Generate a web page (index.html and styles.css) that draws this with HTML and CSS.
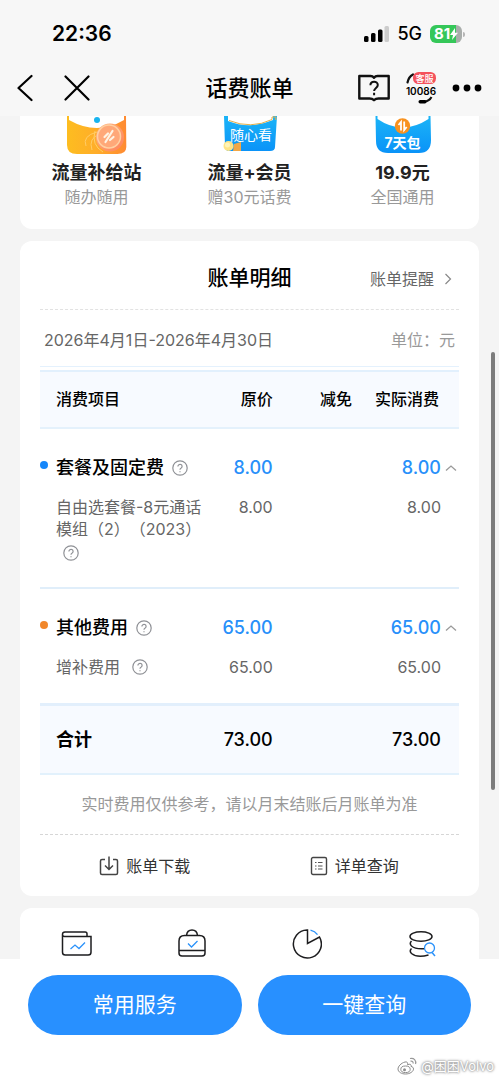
FILE: index.html
```html
<!DOCTYPE html>
<html lang="zh-CN">
<head>
<meta charset="utf-8">
<meta name="viewport" content="width=device-width, initial-scale=1">
<title>话费账单</title>
<link rel="stylesheet" href="styles.css">
</head>
<body>
<svg class="sprite" aria-hidden="true">
  <symbol id="help" viewBox="0 0 16 16">
    <circle cx="8" cy="8" r="7.2" fill="none" stroke="#8f9196" stroke-width="1.2"/>
    <path d="M5.9 6.4a2.1 2 0 1 1 3.3 1.6C8.4 8.5 8 8.8 8 9.8M8 11.2v1.1" fill="none" stroke="#8f9196" stroke-width="1.2"/>
  </symbol>
  <symbol id="up" viewBox="0 0 12 8">
    <path d="M1 6.5 6 2l5 4.5" fill="none" stroke="#9a9a9a" stroke-width="1.3"/>
  </symbol>
</svg>

<header class="top">
  <div class="status">
    <span class="clock">22:36</span>
    <div class="signals">
      <svg width="25" height="16" viewBox="0 0 25 16" aria-hidden="true">
        <rect x="0" y="10" width="4.500" height="6" rx="1.5"/><rect x="7" y="7" width="4.500" height="9" rx="1.5"/><rect x="14" y="3.500" width="4.500" height="12.500" rx="1.5"/><rect x="20.500" y="0" width="4.500" height="16" rx="1.5" fill="#ccc"/>
      </svg>
      <span class="net">5G</span>
      <div class="battery">
        <span class="battery-cell">81<svg width="8" height="12" viewBox="0 0 8 12" aria-hidden="true"><path d="M5 0 0 7h3L2 12l6-7.200H5z" fill="#fff"/></svg></span>
        <span class="battery-nub"></span>
      </div>
    </div>
  </div>
  <nav class="nav">
    <div class="nav-side">
      <button class="icon-btn" aria-label="返回"><svg width="16" height="28" viewBox="0 0 16 28"><path d="M14.500 2 1.500 14l13 12" fill="none" stroke="#000" stroke-width="2.200" stroke-linecap="round" stroke-linejoin="round"/></svg></button>
      <button class="icon-btn" aria-label="关闭"><svg width="26" height="26" viewBox="0 0 26 26"><path d="m1.500 1.500 23 23m0-23-23 23" stroke="#000" stroke-width="2.200" stroke-linecap="round"/></svg></button>
    </div>
    <h1 class="nav-title">话费账单</h1>
    <div class="nav-side nav-end">
      <button class="icon-btn" aria-label="帮助"><svg width="32" height="28" viewBox="0 0 32 28"><path d="M1.300 2h11.200q2.200 0 3.500 1.700Q17.300 2 19.500 2h11.200v22.500H20.500q-2.700 0-4.500 1.700-1.800-1.700-4.500-1.700H1.300z" fill="none" stroke="#111" stroke-width="2.400" stroke-linejoin="round"/><path d="M12.400 11.200c0-4.600 7.400-4.600 7.400-.3 0 2.900-3.700 3.100-3.700 6.200M16.100 18.800v2.500" fill="none" stroke="#111" stroke-width="2"/></svg></button>
      <button class="icon-btn" aria-label="10086客服"><svg width="32" height="32" viewBox="0 0 32 32"><path d="M2.500 10.500Q3.500 5 8 2.500" fill="none" stroke="#111" stroke-width="2.200" stroke-linecap="round"/><rect x="8" y="0" width="23" height="12" rx="5.500" fill="#f4525c"/><text class="svc-tag" x="19.500" y="9.500">客服</text><text class="svc-no" x="16" y="23">10086</text><path d="M26.500 25q-2 4-7.500 4.800" fill="none" stroke="#111" stroke-width="2"/><rect x="13.500" y="28" width="8" height="3.400" rx="1.700"/></svg></button>
      <button class="icon-btn" aria-label="更多"><svg width="30" height="8" viewBox="0 0 30 8"><circle cx="4" cy="4" r="3.400"/><circle cx="15" cy="4" r="3.400"/><circle cx="26" cy="4" r="3.400"/></svg></button>
    </div>
  </nav>
</header>

<main class="content">
  <section class="card offers">
    <a class="offer" href="#data">
      <svg width="66" height="38" viewBox="64 116 66 38" aria-hidden="true">
        <defs>
          <linearGradient id="gold" x1="0" x2="1"><stop offset="0" stop-color="#fdbd20"/><stop offset=".5" stop-color="#ffad29"/><stop offset="1" stop-color="#ff8a32"/></linearGradient>
          <linearGradient id="coin" x1="0" y1="0" x2="1" y2="1"><stop offset="0" stop-color="#ffb47c"/><stop offset="1" stop-color="#ff835b"/></linearGradient>
        </defs>
        <path d="M67 116h2v4q28 16 55 0v-4h2l.3 31q0 7-9 7H77q-10 0-10-9z" fill="url(#gold)"/>
        <circle cx="97" cy="120" r="3" fill="#18b4ef"/>
        <path d="M97 132q-15 4-11 14M100 134q-12 4-8 16M95 131q-4 14 8 21" fill="none" stroke="#ffcc68" stroke-width="1"/>
        <circle cx="110" cy="137.500" r="14" fill="url(#coin)"/>
        <circle cx="109" cy="136.500" r="11.500" fill="#ffa878" stroke="#ffd0a2" stroke-width="1.500"/>
        <path d="m105.500 142 7-11M104.500 137l3.500-3.500M110 140l3.500-3" fill="none" stroke="#fff3e2" stroke-width="2.200" stroke-linecap="round"/>
      </svg>
      <strong class="offer-name">流量补给站</strong>
      <span class="offer-sub">随办随用</span>
    </a>
    <a class="offer" href="#member">
      <svg width="60" height="38" viewBox="219 116 60 38" aria-hidden="true">
        <defs><linearGradient id="sky" x1="0" y1="0" x2="0" y2="1"><stop offset="0" stop-color="#1bb4f7"/><stop offset="1" stop-color="#0a93f8"/></linearGradient></defs>
        <path d="M223 116h4v5q22 9 45-1v-4h4l-2 31q0 4-5 4h-41q-4 0-4-5z" fill="url(#sky)"/>
        <path d="M228 120.500q22 9 43-1v-2.500h4l-.3 3" fill="none" stroke="#e3b04a" stroke-width="1"/>
        <path d="m233 144 7-2v9h-8z" fill="#f1a746"/>
        <circle cx="227.500" cy="146" r="5" fill="#ffe486"/><circle cx="226.500" cy="145" r="2.500" fill="#fff4b8"/>
        <text class="tag-thin" x="250" y="140">随心看</text>
      </svg>
      <strong class="offer-name">流量+会员</strong>
      <span class="offer-sub">赠30元话费</span>
    </a>
    <a class="offer" href="#week">
      <svg width="60" height="38" viewBox="373 116 60 38" aria-hidden="true">
        <path d="M375.500 116h2v3q25 17 51 0v-3h2l.5 24q0 13-12 13h-31q-12 0-12-12z" fill="url(#sky)"/>
        <circle cx="402.500" cy="126" r="7.700" fill="#f8921f"/>
        <path d="M401 130.500v-8.500l-2.500 3M404.200 121.500v8.500l2.500-3" fill="none" stroke="#fff" stroke-width="1.800"/>
        <text class="tag-bold" x="402.500" y="148">7天包</text>
      </svg>
      <strong class="offer-name">19.9元</strong>
      <span class="offer-sub">全国通用</span>
    </a>
  </section>

  <section class="card bill">
    <div class="bill-head">
      <h2 class="bill-title">账单明细</h2>
      <a class="remind" href="#remind">账单提醒<svg width="8" height="12" viewBox="0 0 8 12" aria-hidden="true"><path d="m1.500 1 5 5-5 5" fill="none" stroke="#888" stroke-width="1.200"/></svg></a>
    </div>
    <div class="period"><span>2026年4月1日-2026年4月30日</span><span class="unit">单位：元</span></div>
    <table class="fees">
      <thead>
        <tr><th class="c-item">消费项目</th><th class="c-price">原价</th><th class="c-off">减免</th><th class="c-paid">实际消费</th></tr>
      </thead>
      <tbody>
        <tr class="group">
          <td class="dot dot-blue"><span class="label">套餐及固定费<button class="help" aria-label="说明"><svg width="16" height="16"><use href="#help"/></svg></button></span></td>
          <td>8.00</td><td></td>
          <td><span class="paid">8.00<button class="fold" aria-label="收起"><svg width="12" height="8"><use href="#up"/></svg></button></span></td>
        </tr>
        <tr class="detail">
          <td>自由选套餐-8元通话模组（2）（2023） <button class="help help-line" aria-label="说明"><svg width="16" height="16"><use href="#help"/></svg></button></td>
          <td>8.00</td><td></td><td>8.00</td>
        </tr>
      </tbody>
      <tbody>
        <tr class="group">
          <td class="dot dot-orange"><span class="label">其他费用<button class="help" aria-label="说明"><svg width="16" height="16"><use href="#help"/></svg></button></span></td>
          <td>65.00</td><td></td>
          <td><span class="paid">65.00<button class="fold" aria-label="收起"><svg width="12" height="8"><use href="#up"/></svg></button></span></td>
        </tr>
        <tr class="detail">
          <td><span class="label label-wide">增补费用<button class="help" aria-label="说明"><svg width="16" height="16"><use href="#help"/></svg></button></span></td>
          <td>65.00</td><td></td><td>65.00</td>
        </tr>
      </tbody>
      <tfoot>
        <tr><th>合计</th><td>73.00</td><td></td><td>73.00</td></tr>
      </tfoot>
    </table>
    <p class="note">实时费用仅供参考，请以月末结账后月账单为准</p>
    <div class="actions">
      <a class="action" href="#download"><svg width="20" height="20" viewBox="0 0 20 20" aria-hidden="true"><path d="M6 3.500H3q-1.500 0-1.500 1.500v12q0 1.500 1.500 1.500h14q1.500 0 1.500-1.500V5q0-1.500-1.500-1.500h-3M10 .5v13M6 9.500l4 4 4-4" fill="none" stroke="#444" stroke-width="1.500"/></svg>账单下载</a>
      <a class="action" href="#details"><svg width="18" height="20" viewBox="0 0 18 20" aria-hidden="true"><rect x="1.500" y="1.500" width="15" height="17" rx="1.500" fill="none" stroke="#444" stroke-width="1.400"/><path d="M5 6.500h1.500M5 10h1.500M5 13h1.500M8 6.500h4.500M8 10h4.500M8 13h4.500" stroke="#555" stroke-width="1.200"/></svg>详单查询</a>
    </div>
  </section>

  <section class="card tools">
    <a href="#wallet" aria-label="账户"><svg width="32" height="30" viewBox="0 0 32 30"><path d="M26 7.500V4.800q0-1.800-1.800-1.800H4Q1.500 3 1.500 5.500v17.700Q1.500 26 4.300 26h22.900q2.800 0 2.800-2.800V7.500H3.500q-2 0-2-2" fill="none" stroke="#1d1d1f" stroke-width="1.500"/><path d="m9.500 20 4.500-4 4 3.500 6-6" fill="none" stroke="#2b92fa" stroke-width="1.300"/></svg></a>
    <a href="#orders" aria-label="办理"><svg width="30" height="30" viewBox="0 0 30 30"><path d="M9.500 6.500Q10 1 15 1t5.500 5.500M7.500 6.500h15q5.500 0 5.500 5.500v12q0 3-3 3H5q-3 0-3-3V12q0-5.500 5.500-5.500zM2 21.500h26" fill="none" stroke="#1d1d1f" stroke-width="1.500"/><path d="m11 14.500 3.500 3.500 6-6" fill="none" stroke="#2b92fa" stroke-width="1.300"/></svg></a>
    <a href="#usage" aria-label="用量"><svg width="30" height="30" viewBox="0 0 30 30"><path d="M15 1A14 14 0 1 0 27.500 8L15.500 14.500V1z" fill="none" stroke="#1d1d1f" stroke-width="1.500"/><path d="M18.500 1.200q4.500 1 7 4.500" fill="none" stroke="#2b92fa" stroke-width="1.300"/></svg></a>
    <a href="#records" aria-label="查询"><svg width="28" height="28" viewBox="0 0 28 28"><ellipse cx="13" cy="6.500" rx="11" ry="4.700" fill="none" stroke="#1d1d1f" stroke-width="1.500"/><path d="M3.500 11Q1 13.500 3.500 16q4 3.500 13 2.700M3.500 18.500Q1 21 3.500 23.500 9 28 20.500 25" fill="none" stroke="#1d1d1f" stroke-width="1.500"/><circle cx="21.500" cy="18" r="5" fill="#fff" stroke="#2b92fa" stroke-width="1.300"/><path d="m24 22.500 3 3.500" stroke="#2b92fa" stroke-width="1.500"/></svg></a>
  </section>
  <div class="scroll-thumb"></div>
</main>

<footer class="dock">
  <button class="primary">常用服务</button>
  <button class="primary">一键查询</button>
  <div class="mark"><svg width="20" height="18" viewBox="0 0 20 18" aria-hidden="true"><path d="M8 5C4 6 1 9.500 1 12c0 3 3.500 5 7.500 5 4.500 0 8-2.500 8-5 0-1.500-1-2.200-2.500-2.600.7-2-1-2.700-3.500-1.700C11 5.500 10 4.500 8 5z" fill="#fff" stroke="#8d8d8d"/><ellipse cx="8.500" cy="12.300" rx="4.700" ry="3.300" fill="none" stroke="#8d8d8d"/><circle cx="7.500" cy="12.800" r="1.500" fill="#8d8d8d"/><path d="M13 1.500c4-1 6.500 2 5.500 5.500M13.500 4.200c2-.4 2.900.8 2.500 2.300" fill="none" stroke="#999" stroke-width="1.200"/></svg>@困困Volvo</div>
</footer>
</body>
</html>
```
FILE: styles.css
```css
* { box-sizing: border-box; }
body {
  margin: 0;
  height: 100vh;
  display: flex;
  flex-direction: column;
  overflow: hidden;
  background: #f4f4f4;
  color: #000;
  font: 400 16px/22px Inter, "Noto Sans CJK SC", sans-serif;
  text-spacing-trim: space-all;
}
button { padding: 0; border: 0; background: none; color: inherit; font: inherit; cursor: pointer; }
a { color: inherit; text-decoration: none; }
svg { display: block; flex: none; }
.sprite { position: absolute; width: 0; height: 0; }

.top { background: #f7f7f7; }
.status { display: flex; justify-content: space-between; align-items: center; padding: 20px 34px 0 52px; line-height: 28px; }
.clock { font-size: 21px; font-weight: 600; }
.signals { display: flex; align-items: center; gap: 8px; }
.net { font-size: 18px; font-weight: 500; }
.battery { display: flex; align-items: center; gap: 1px; }
.battery-cell {
  display: flex; align-items: center; justify-content: center;
  width: 32px; height: 18px; border-radius: 6px;
  background: linear-gradient(90deg, #35c759 82%, #a9adab 82%);
  color: #fff; font-size: 15px; font-weight: 700;
}
.battery-nub { width: 2px; height: 5px; border-radius: 0 2px 2px 0; background: #b5b5b5; }
.nav { display: grid; grid-template-columns: 1fr auto 1fr; align-items: center; height: 68px; padding: 12px 17px 0; }
.nav-side { display: flex; align-items: center; gap: 31px; }
.nav-end { justify-content: flex-end; gap: 15px; }
.icon-btn { display: block; }
.nav-title { margin: 0; font-size: 22px; line-height: 32px; font-weight: 500; }
.svc-tag { fill: #fff; font-size: 9px; font-weight: 500; text-anchor: middle; }
.svc-no { font-size: 10px; font-weight: 600; text-anchor: middle; }

.content { position: relative; flex: 1; min-height: 0; overflow: hidden; padding: 0 20px; display: flex; flex-direction: column; gap: 12px; }
.card { background: #fff; border-radius: 12px; }
.offers { display: grid; grid-template-columns: repeat(3, 1fr); padding-bottom: 21px; border-radius: 0 0 12px 12px; }
.offer { display: flex; flex-direction: column; align-items: center; }
.offer-name { margin-top: 6px; font-size: 18px; line-height: 26px; font-weight: 700; color: #222; }
.offer-sub { color: #999; }
.tag-thin { fill: #fff; font-size: 14px; text-anchor: middle; }
.tag-bold { fill: #fff; font-size: 14px; font-weight: 700; text-anchor: middle; }

.bill { padding: 0 20px; }
.bill-head { display: grid; grid-template-columns: 1fr auto 1fr; align-items: center; height: 69px; padding-top: 6px; border-bottom: 1px dashed #e2e2e2; }
.bill-title { grid-column: 2; margin: 0; font-size: 21px; line-height: 30px; font-weight: 500; }
.remind { justify-self: end; display: flex; align-items: center; gap: 10px; padding: 2px 7px 0 0; color: #666; }
.period { display: flex; justify-content: space-between; padding: 19px 4px 15px; border-bottom: 1px solid #e4f1fd; color: #666; }
.unit { color: #999; }

.fees { width: 100%; margin-top: 3px; table-layout: fixed; border-spacing: 0; }
.fees th, .fees td { padding: 0; text-align: right; vertical-align: top; }
.fees th:first-child, .fees td:first-child { padding-left: 16px; text-align: left; }
.fees th:last-child, .fees td:last-child { padding-right: 18px; }
.fees thead th { padding-top: 16px; padding-bottom: 17px; background: #f7faff; border-top: 2px solid #e2f0fd; border-bottom: 2px solid #e4f1fc; font-weight: 500; }
.fees thead th:last-child { padding-right: 20px; }
.c-item { width: 39%; }
.c-price { width: 70px; }
.c-off { width: 19%; }
.c-paid { width: 107px; }
.fees .group td { padding-top: 27px; color: #2890fa; font-size: 18px; line-height: 24px; }
.fees .group td:last-child { padding-right: 2px; }
.fees .group td:first-child { color: #000; font-weight: 500; }
.dot { position: relative; }
.dot::before { content: ""; position: absolute; left: 0; top: 32px; width: 8px; height: 8px; border-radius: 50%; background: #1687fa; }
.dot-orange::before { background: #f1872b; }
.label { display: flex; align-items: center; gap: 8px; white-space: nowrap; }
.label-wide { gap: 12px; }
.help { display: block; }
.help-line { display: inline-block; margin-left: 7px; vertical-align: middle; }
.paid { display: flex; justify-content: flex-end; align-items: center; gap: 4px; }
.fees .group td:not(:first-child) { font-weight: 500; }
.fees .detail td { padding-top: 16px; padding-bottom: 25px; color: #666; border-bottom: 2px solid #e0eefa; }
.fees tbody:last-of-type .detail td { border-bottom: 0; }
.fees tfoot th, .fees tfoot td { padding-top: 22px; padding-bottom: 21px; background: #f7faff; border-top: 3px solid #e2effc; border-bottom: 2px solid #e2f1fc; font-size: 18px; line-height: 24px; font-weight: 500; }
.fees tfoot th { font-weight: 700; }
.note { margin: 0; padding: 18px 0 19px; border-bottom: 1px dashed #d6d6d6; color: #999; text-align: center; }
.actions { display: grid; grid-template-columns: 1fr 1fr; padding: 20px 0 19px; }
.action { display: flex; align-items: center; justify-content: center; gap: 7px; color: #333; }

.tools { flex: 1 0 auto; display: grid; grid-template-columns: repeat(4, 1fr); align-items: start; padding-top: 20px; border-radius: 12px 12px 0 0; }
.tools a { display: grid; place-items: center; height: 32px; }
.scroll-thumb { position: absolute; right: 4px; top: 28%; width: 4px; height: 52%; border-radius: 2px; background: #7d7d7d; }

.dock { position: relative; display: grid; grid-template-columns: 1fr 1fr; gap: 16px; padding: 16px 28px 45px; background: #fff; }
.primary { height: 60px; border-radius: 30px; background: #2890ff; color: #fff; font-size: 21px; line-height: 30px; }
.mark { position: absolute; right: 5px; bottom: 4px; display: flex; align-items: center; gap: 4px; color: #fff; font-size: 13px; line-height: 20px; text-shadow: 0 0 3px #777, 0 0 2px #999; }
```
